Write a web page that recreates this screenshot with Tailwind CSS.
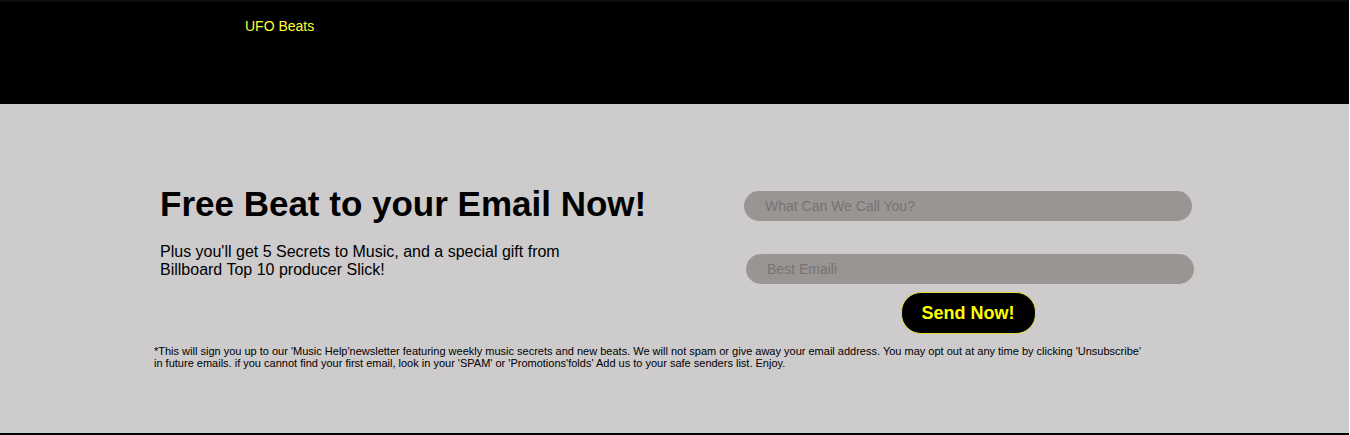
<!DOCTYPE html>
<html lang="en">
<head>
<meta charset="utf-8">
<meta name="viewport" content="width=device-width, initial-scale=1">
<title>UFO Beats</title>
<script src="https://cdn.jsdelivr.net/npm/@tailwindcss/browser@4"></script>
</head>
<body class="flex min-h-screen flex-col border-r border-white bg-black font-['Liberation_Sans',Arial,sans-serif] text-black">
  <header class="h-[104px] border-t-2 border-[#0c0c0c] bg-black">
    <div class="mx-auto max-w-[1041px] pt-3.5 pl-[91px]">
      <a href="#" class="block w-fit text-sm leading-5 text-[#ffff33]">UFO Beats</a>
    </div>
  </header>
  <main class="bg-[#cdcbcb] pt-20 pb-16">
    <div class="mx-auto max-w-[1041px] pr-px">
      <div class="flex justify-between">
        <div class="pl-1.5">
          <h1 class="text-[35px] leading-10 font-bold">Free Beat to your Email Now!</h1>
          <p class="mt-[19px] max-w-[420px] text-base leading-[18px]">Plus you'll get 5 Secrets to Music, and a special gift from Billboard Top 10 producer Slick!</p>
        </div>
        <form class="flex w-[450px] flex-col pt-[7px]">
          <input type="text" aria-label="Name" placeholder="What Can We Call You?" class="mr-0.5 h-[30px] rounded-full bg-[#999593] px-[21px] text-sm placeholder:text-[#767373]">
          <input type="email" aria-label="Email" placeholder="Best Emaili" class="mt-[33px] ml-0.5 h-[30px] rounded-full bg-[#999593] px-[21px] text-sm placeholder:text-[#767373]">
          <button type="submit" class="mt-2 mr-0.5 h-[42px] self-center rounded-[20px] border border-[#e6dc3c] bg-black px-5 text-lg leading-5 font-bold text-[#ffff00]">Send Now!</button>
        </form>
      </div>
      <p class="mt-[11px] max-w-[990px] text-[11px] leading-3">*This will sign you up to our 'Music Help'newsletter featuring weekly music secrets and new beats. We will not spam or give away your email address. You may opt out at any time by clicking 'Unsubscribe' in future emails. if you cannot find your first email, look in your 'SPAM' or 'Promotions'folds' Add us to your safe senders list. Enjoy.</p>
    </div>
  </main>
</body>
</html>
